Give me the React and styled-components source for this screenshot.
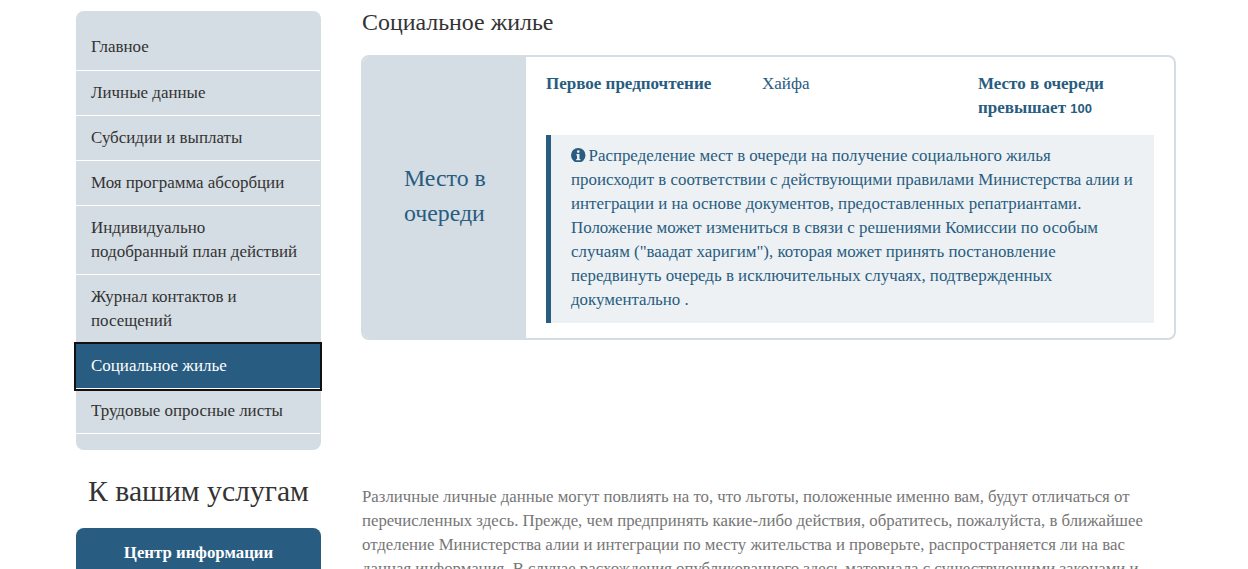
import React from "react";
import styled, { createGlobalStyle } from "styled-components";

const Global = createGlobalStyle`
  html, body { margin: 0; padding: 0; background: #fff; }
  html { height: 569px; overflow: hidden; }
  body { font-family: "Liberation Serif", "Times New Roman", serif; font-size: 17px; line-height: 24px; color: #333; }
`;

const Page = styled.div`
  display: flex;
  align-items: flex-start;
  height: 569px;
  overflow: hidden;
  padding: 11px 0 0 76px;
  box-sizing: border-box;
`;
const Side = styled.aside`
  width: 245px;
  flex: none;
  margin-right: 40px;
`;
const Nav = styled.nav`
  background: #d4dde3;
  border-radius: 8px;
  padding: 14.4px 1px 15.2px 0;
`;
const Item = styled.a`
  display: block;
  padding: 10.07px 15px;
  border-bottom: 1px solid #fff;
  font-size: 16.95px;
  color: ${p => (p.$active ? "#fff" : "#333")};
  background: ${p => (p.$active ? "#285c80" : "transparent")};
  outline: ${p => (p.$active ? "2px solid #111" : "none")};
  position: relative;
`;
const ServicesTitle = styled.h2`
  margin: 25px 0 0;
  font-size: 29.7px;
  line-height: 32px;
  font-weight: 400;
  color: #333;
  text-align: center;
`;
const ServiceCard = styled.div`
  margin-top: 21px;
  background: #285c80;
  border-radius: 8px;
  padding: 13px 15px;
  color: #fff;
  font-weight: 700;
  text-align: center;
  font-size: 16.8px;
`;
const Main = styled.main`
  width: 815px;
  flex: none;
`;
const Title = styled.h1`
  margin: -1px 0 0 1px;
  font-size: 23.9px;
  line-height: 24px;
  font-weight: 400;
  color: #333;
`;
const Card = styled.section`
  display: flex;
  margin-top: 21px;
  border: 2px solid #d4dde3;
  border-radius: 8px;
  overflow: hidden;
`;
const Label = styled.div`
  width: 163px;
  flex: none;
  box-sizing: border-box;
  padding: 0 30px 4px 41px;
  background: #d4dde3;
  color: #285c80;
  font-size: 23.8px;
  line-height: 35px;
  display: flex;
  align-items: center;
`;
const Body = styled.div`
  flex: 1;
  padding: 15px 20px 15px;
`;
const Info = styled.div`
  display: grid;
  grid-template-columns: 216px 216px 1fr;
  color: #285c80;
`;
const Strong = styled.div`
  font-weight: 700;
`;
const Digits = styled.span`
  font-family: "Liberation Sans", Arial, sans-serif;
  font-size: 13px;
  line-height: 0;
`;
const Notice = styled.div`
  margin-top: 15px;
  background: #edf1f4;
  border-left: 5px solid #285c80;
  padding: 9px 20px 11px;
  font-size: 16.9px;
  color: #285c80;
`;
const InfoIcon = styled.svg`
  width: 14.5px;
  height: 14.5px;
  margin-right: 3px;
  vertical-align: -1px;
  fill: #285c80;
`;
const Disclaimer = styled.p`
  margin: 145px 0 0 1px;
  font-size: 16.8px;
  color: #767676;
`;

const items = [
  "Главное",
  "Личные данные",
  "Субсидии и выплаты",
  "Моя программа абсорбции",
  "Индивидуально подобранный план действий",
  "Журнал контактов и посещений",
  "Социальное жилье",
  "Трудовые опросные листы",
];

export default function App() {
  return (
    <Page>
      <Global />
      <Side>
        <Nav>
          {items.map((t, i) => (
            <Item key={t} $active={i === 6}>{t}</Item>
          ))}
        </Nav>
        <ServicesTitle>К вашим услугам</ServicesTitle>
        <ServiceCard>Центр информации Телефон *2994</ServiceCard>
      </Side>
      <Main>
        <Title>Социальное жилье</Title>
        <Card>
          <Label>Место в очереди</Label>
          <Body>
            <Info>
              <Strong>Первое предпочтение</Strong>
              <div>Хайфа</div>
              <Strong>Место в очереди превышает <Digits>100</Digits></Strong>
            </Info>
            <Notice>
              <InfoIcon viewBox="0 0 24 24" aria-hidden="true">
                <path fillRule="evenodd" d="M12 0a12 12 0 1 0 0 24a12 12 0 0 0 0-24zM12 3.6a2.3 2.3 0 1 1 0 4.6a2.3 2.3 0 0 1 0-4.6zM9 10h5v8h1.600v2.400H8.600V18H10v-5.600H9z" />
              </InfoIcon>
              Распределение мест в очереди на получение социального жилья происходит в соответствии с действующими правилами Министерства алии и интеграции и на основе документов, предоставленных репатриантами. Положение может измениться в связи с решениями Комиссии по особым случаям ("ваадат харигим"), которая может принять постановление передвинуть очередь в исключительных случаях, подтвержденных документально .
            </Notice>
          </Body>
        </Card>
        <Disclaimer>
          Различные личные данные могут повлиять на то, что льготы, положенные именно вам, будут отличаться от перечисленных здесь. Прежде, чем предпринять какие-либо действия, обратитесь, пожалуйста, в ближайшее отделение Министерства алии и интеграции по месту жительства и проверьте, распространяется ли на вас данная информация. В случае расхождения опубликованного здесь материала с существующими законами и
        </Disclaimer>
      </Main>
    </Page>
  );
}
